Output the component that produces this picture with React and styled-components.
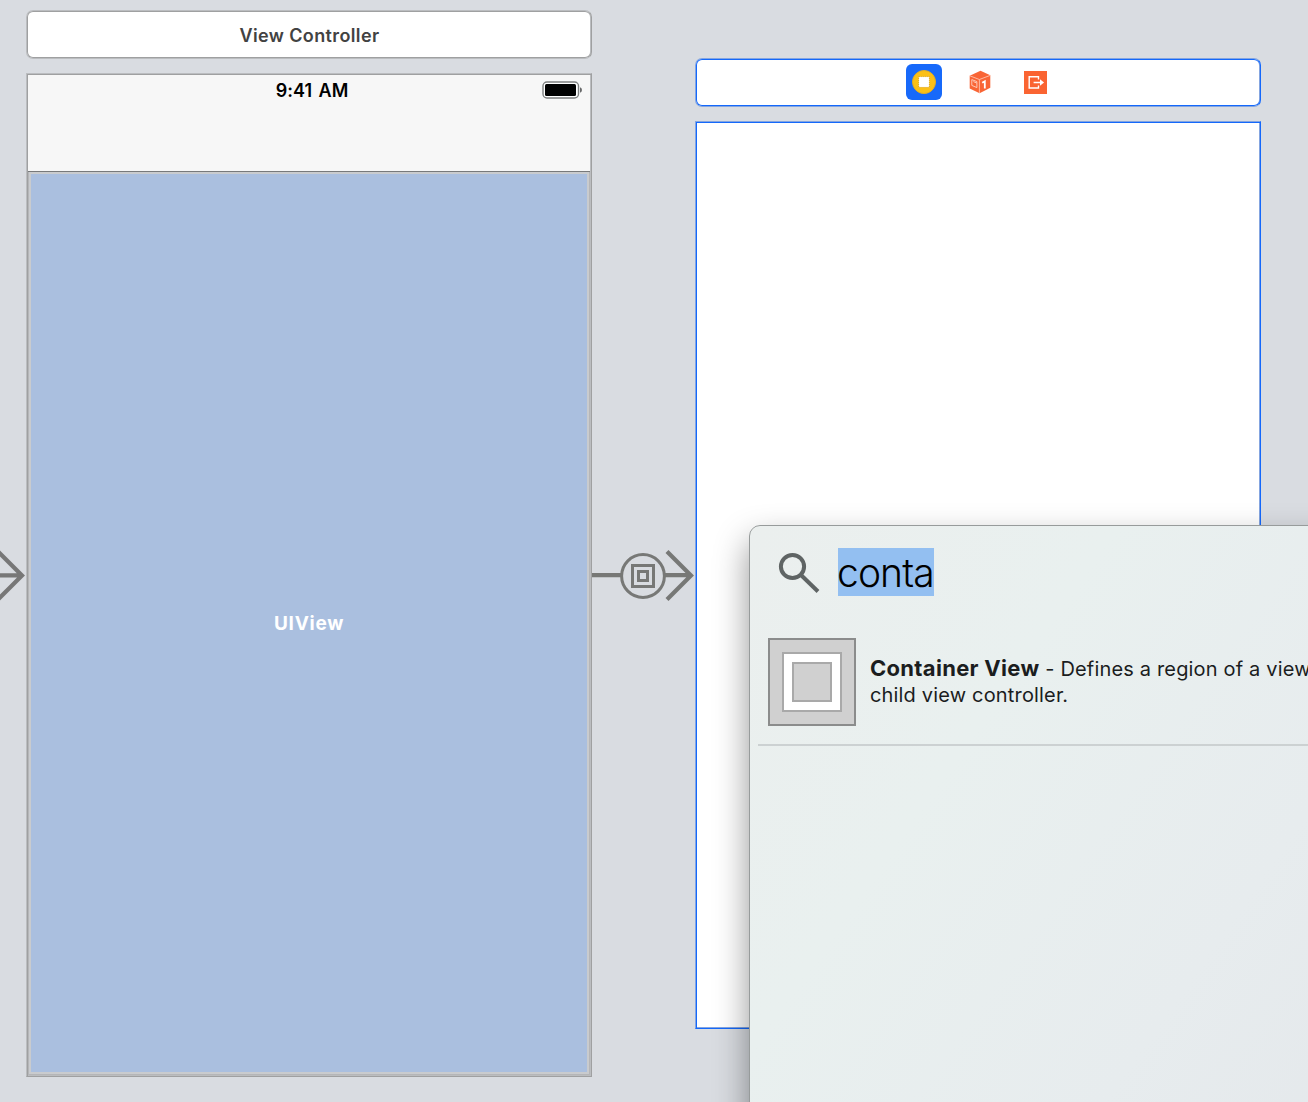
import React from "react";
import styled, { createGlobalStyle, css } from "styled-components";

const GlobalStyle = createGlobalStyle`
  * { box-sizing: border-box; }
  body { margin: 0; overflow: hidden; font-family: Inter, "Liberation Sans", sans-serif; }
`;

const Canvas = styled.main`
  position: relative;
  width: 1308px;
  height: 1102px;
  overflow: hidden;
  background: #d9dce1;
`;

const Scene = styled.section`
  position: absolute;
  left: ${(p) => p.$x}px;
  top: ${(p) => p.$y}px;
  width: 566px;
  display: flex;
  flex-direction: column;
  gap: 14px;
`;

const soft = (p) => (p.$selected ? "#84a5e0" : "#bbbdc0");
const strong = (p) => (p.$selected ? "#1468fb" : "#9fa0a1");

const TitleBar = styled.header`
  border: 1px solid;
  border-color: ${soft} ${strong} ${soft} ${soft};
  box-shadow: inset 1px 0 ${strong}, inset 0 1px ${strong}, inset 0 -1px ${strong}, inset -1px 0 ${soft};
  height: 49px;
  border-radius: 7px;
  background: #fff;
  display: flex;
  align-items: center;
  justify-content: center;
  gap: 19.5px;
  padding-left: 3px;
`;

const SceneTitle = styled.span`
  font-size: 18px;
  font-weight: 600;
  line-height: 24px;
  letter-spacing: 0.37px;
  color: #424242;
  padding: 2px 2px 0 0;
`;

const Device = styled.div`
  height: ${(p) => p.$height}px;
  border: 1px solid;
  border-color: ${soft} ${strong} ${strong} ${soft};
  box-shadow: inset 1px 1px ${strong}, inset -1px -1px ${soft};
  padding: 1px;
  background: ${(p) => (p.$selected ? "#fff" : "#b5b6b8")};
  display: flex;
  flex-direction: column;
`;

const NavigationBar = styled.div`
  height: 97px;
  flex: none;
  background: #f7f7f7;
  border-bottom: 1px solid #77797b;
`;

const StatusBar = styled.div`
  display: grid;
  grid-template-columns: 1fr auto 1fr;
  align-items: center;
  height: 30px;
  padding-left: 6px;
`;

const Time = styled.span`
  grid-column: 2;
  font-size: 18px;
  font-weight: 600;
  line-height: 24px;
  letter-spacing: 0.1px;
  word-spacing: 1.5px;
  color: #000;
  padding-top: 1px;
`;

const BatterySlot = styled.div`
  display: flex;
  justify-content: flex-end;
  padding-right: 8px;
`;

const PlaceholderView = styled.div`
  flex: 1;
  border: 2px solid #c9cbce;
  margin: 0 1px 1px;
  padding-top: 1px;
  background: #aabfdf;
  display: flex;
  align-items: center;
  justify-content: center;
  color: #fff;
  font-size: 19px;
  font-weight: 700;
  letter-spacing: 0.7px;
`;

const DockItem = styled.div`
  width: 36px;
  height: 36px;
  margin-bottom: 1px;
  border-radius: 6px;
  display: flex;
  align-items: center;
  justify-content: center;
  background: ${(p) => (p.$active ? "#1769fa" : "transparent")};
`;

const Connection = styled.svg`
  position: absolute;
  left: ${(p) => p.$x}px;
  top: 545px;
  display: block;
`;

const Library = styled.aside`
  position: absolute;
  left: 749px;
  top: 525px;
  width: 900px;
  height: 700px;
  border: 1px solid #979b9b;
  border-radius: 11px 0 0 0;
  background: linear-gradient(125deg, #ebefee 0, #e9f0ef 300px, #e7ecee 620px, #e4e8eb 850px);
  box-shadow: 0 16px 34px 0 rgba(0, 0, 0, 0.42);
`;

const SearchRow = styled.div`
  display: flex;
  align-items: center;
  gap: 18px;
  height: 94px;
  padding: 0 0 2px 28px;
`;

const Glass = styled.svg`
  display: block;
  margin-top: 2px;
`;

const Query = styled.span`
  display: block;
  height: 48px;
  width: 96px;
  line-height: 49px;
  font-size: 39px;
  font-weight: 300;
  letter-spacing: -0.9px;
  text-indent: -1px;
  color: #000;
  background: #93bff1;
  white-space: nowrap;
`;

const ResultRow = styled.div`
  display: flex;
  gap: 14px;
  margin-left: 8px;
  padding: 18px 0 0 10px;
  height: 126px;
  border-bottom: 2px solid #ccd1d2;
`;

const Frame = styled.div`
  width: ${(p) => p.$size}px;
  height: ${(p) => p.$size}px;
  flex: none;
  border: 2px solid ${(p) => p.$line};
  background: ${(p) => p.$fill};
  display: flex;
  align-items: center;
  justify-content: center;
`;

const Description = styled.p`
  margin: 0;
  padding-top: 18px;
  font-size: 20px;
  line-height: 26px;
  letter-spacing: 0.17px;
  color: #1b1d1e;
  white-space: nowrap;
`;

const ResultName = styled.strong`
  font-size: 22px;
  line-height: 20px;
  font-weight: 700;
  letter-spacing: 0.3px;
`;

function Battery() {
  return (
    <svg width="40" height="18" viewBox="0 0 40 18">
      <rect x="1" y="1" width="35.5" height="16" rx="4" fill="#fff" stroke="#7d7f7f" strokeWidth="1.4" />
      <rect x="3" y="3" width="31" height="12" rx="1.5" fill="#000" />
      <path d="M38 6.2Q40 6.8 40 9T38 11.8Z" fill="#68696a" />
    </svg>
  );
}

function ControllerIcon() {
  return (
    <svg width="24" height="24" viewBox="0 0 24 24">
      <circle cx="12" cy="12" r="11.5" fill="#fbc017" stroke="#e4ae23" />
      <rect x="6.7" y="6.7" width="10.6" height="10.6" fill="#fff" stroke="#d79e12" strokeDasharray="1 1" />
      <rect x="7.4" y="7.4" width="9.2" height="9.2" fill="#fff" />
    </svg>
  );
}

const CubeSvg = styled.svg`
  display: block;
  overflow: visible;
`;

function ResponderIcon() {
  return (
    <CubeSvg width="22" height="24" viewBox="0 0 22 24">
      <path d="M11.5.8 21.3 5.2V17.8L10.6 23.2.7 18.5V5.7Z" fill="#f96535" />
      <path d="M.8 5.8 10.4 9.5 21.2 5.4M10.4 9.5V23" fill="none" stroke="#ffc3ae" strokeWidth="0.9" />
      <path d="M2.8 9.6 7.9 11.6V17.6L2.8 15.4ZM4.4 11.6 7.7 13" fill="none" stroke="#ffd3c4" strokeWidth="0.9" />
      <path d="M13.2 12.7 15.8 11.2V18.6" fill="none" stroke="#fff" strokeWidth="1.8" />
    </CubeSvg>
  );
}

function ExitIcon() {
  return (
    <svg width="23" height="23" viewBox="0 0 23 23">
      <rect width="23" height="23" fill="#fa6432" />
      <path d="M14.5 8.5V5.8H5.2V17H14.5V14.5M9.6 11.5H18" fill="none" stroke="#fff" strokeWidth="1.4" />
      <path d="M16 8.2 20.1 11.5 16 14.8Z" fill="#fff" />
    </svg>
  );
}

function EntryArrow() {
  return (
    <Connection $x={0} width="26" height="60" viewBox="0 0 26 60">
      <path d="M0 30.3H21M-3 5.5 22 30.5-3 55.5" fill="none" stroke="#777" strokeWidth="4.2" />
    </Connection>
  );
}

function RelationshipSegue() {
  return (
    <Connection $x={592} width="104" height="62" viewBox="1 0 104 62">
      <g fill="none" stroke="#777876">
        <path d="M0 30.2H31M74 30.2H99M76 6.5 100 30.5 76 54.5" strokeWidth="4.2" />
        <circle cx="52" cy="31" r="21.4" strokeWidth="3" />
        <rect x="41.5" y="20.5" width="21" height="21" strokeWidth="3" />
        <rect x="47.5" y="26.5" width="9" height="9" strokeWidth="3" />
      </g>
    </Connection>
  );
}

function SearchIcon() {
  return (
    <Glass width="42" height="42" viewBox="0 0 42 42">
      <g fill="none" stroke="#5f6464" strokeWidth="4">
        <circle cx="14.5" cy="14.5" r="11.6" />
        <path d="M23 23 40 39.5" />
      </g>
    </Glass>
  );
}

export default function App() {
  return (
    <Canvas>
      <GlobalStyle />
      <Scene $x={26} $y={10}>
        <TitleBar>
          <SceneTitle>View Controller</SceneTitle>
        </TitleBar>
        <Device $height={1004}>
          <NavigationBar>
            <StatusBar>
              <Time>9:41 AM</Time>
              <BatterySlot><Battery /></BatterySlot>
            </StatusBar>
          </NavigationBar>
          <PlaceholderView>UIView</PlaceholderView>
        </Device>
      </Scene>
      <Scene $x={695} $y={58}>
        <TitleBar $selected>
          <DockItem $active><ControllerIcon /></DockItem>
          <DockItem><ResponderIcon /></DockItem>
          <DockItem><ExitIcon /></DockItem>
        </TitleBar>
        <Device $selected $height={908} />
      </Scene>
      <EntryArrow />
      <RelationshipSegue />
      <Library>
        <SearchRow>
          <SearchIcon />
          <Query>conta</Query>
        </SearchRow>
        <ResultRow>
          <Frame $size={88} $line="#8b8c8c" $fill="#d0d0d0">
            <Frame $size={60} $line="#a9a9a9" $fill="#fff">
              <Frame $size={40} $line="#a9a9a9" $fill="#d0d0d0" />
            </Frame>
          </Frame>
          <Description>
            <ResultName>Container View</ResultName> - Defines a region of a view
            <br />
            child view controller.
          </Description>
        </ResultRow>
      </Library>
    </Canvas>
  );
}
